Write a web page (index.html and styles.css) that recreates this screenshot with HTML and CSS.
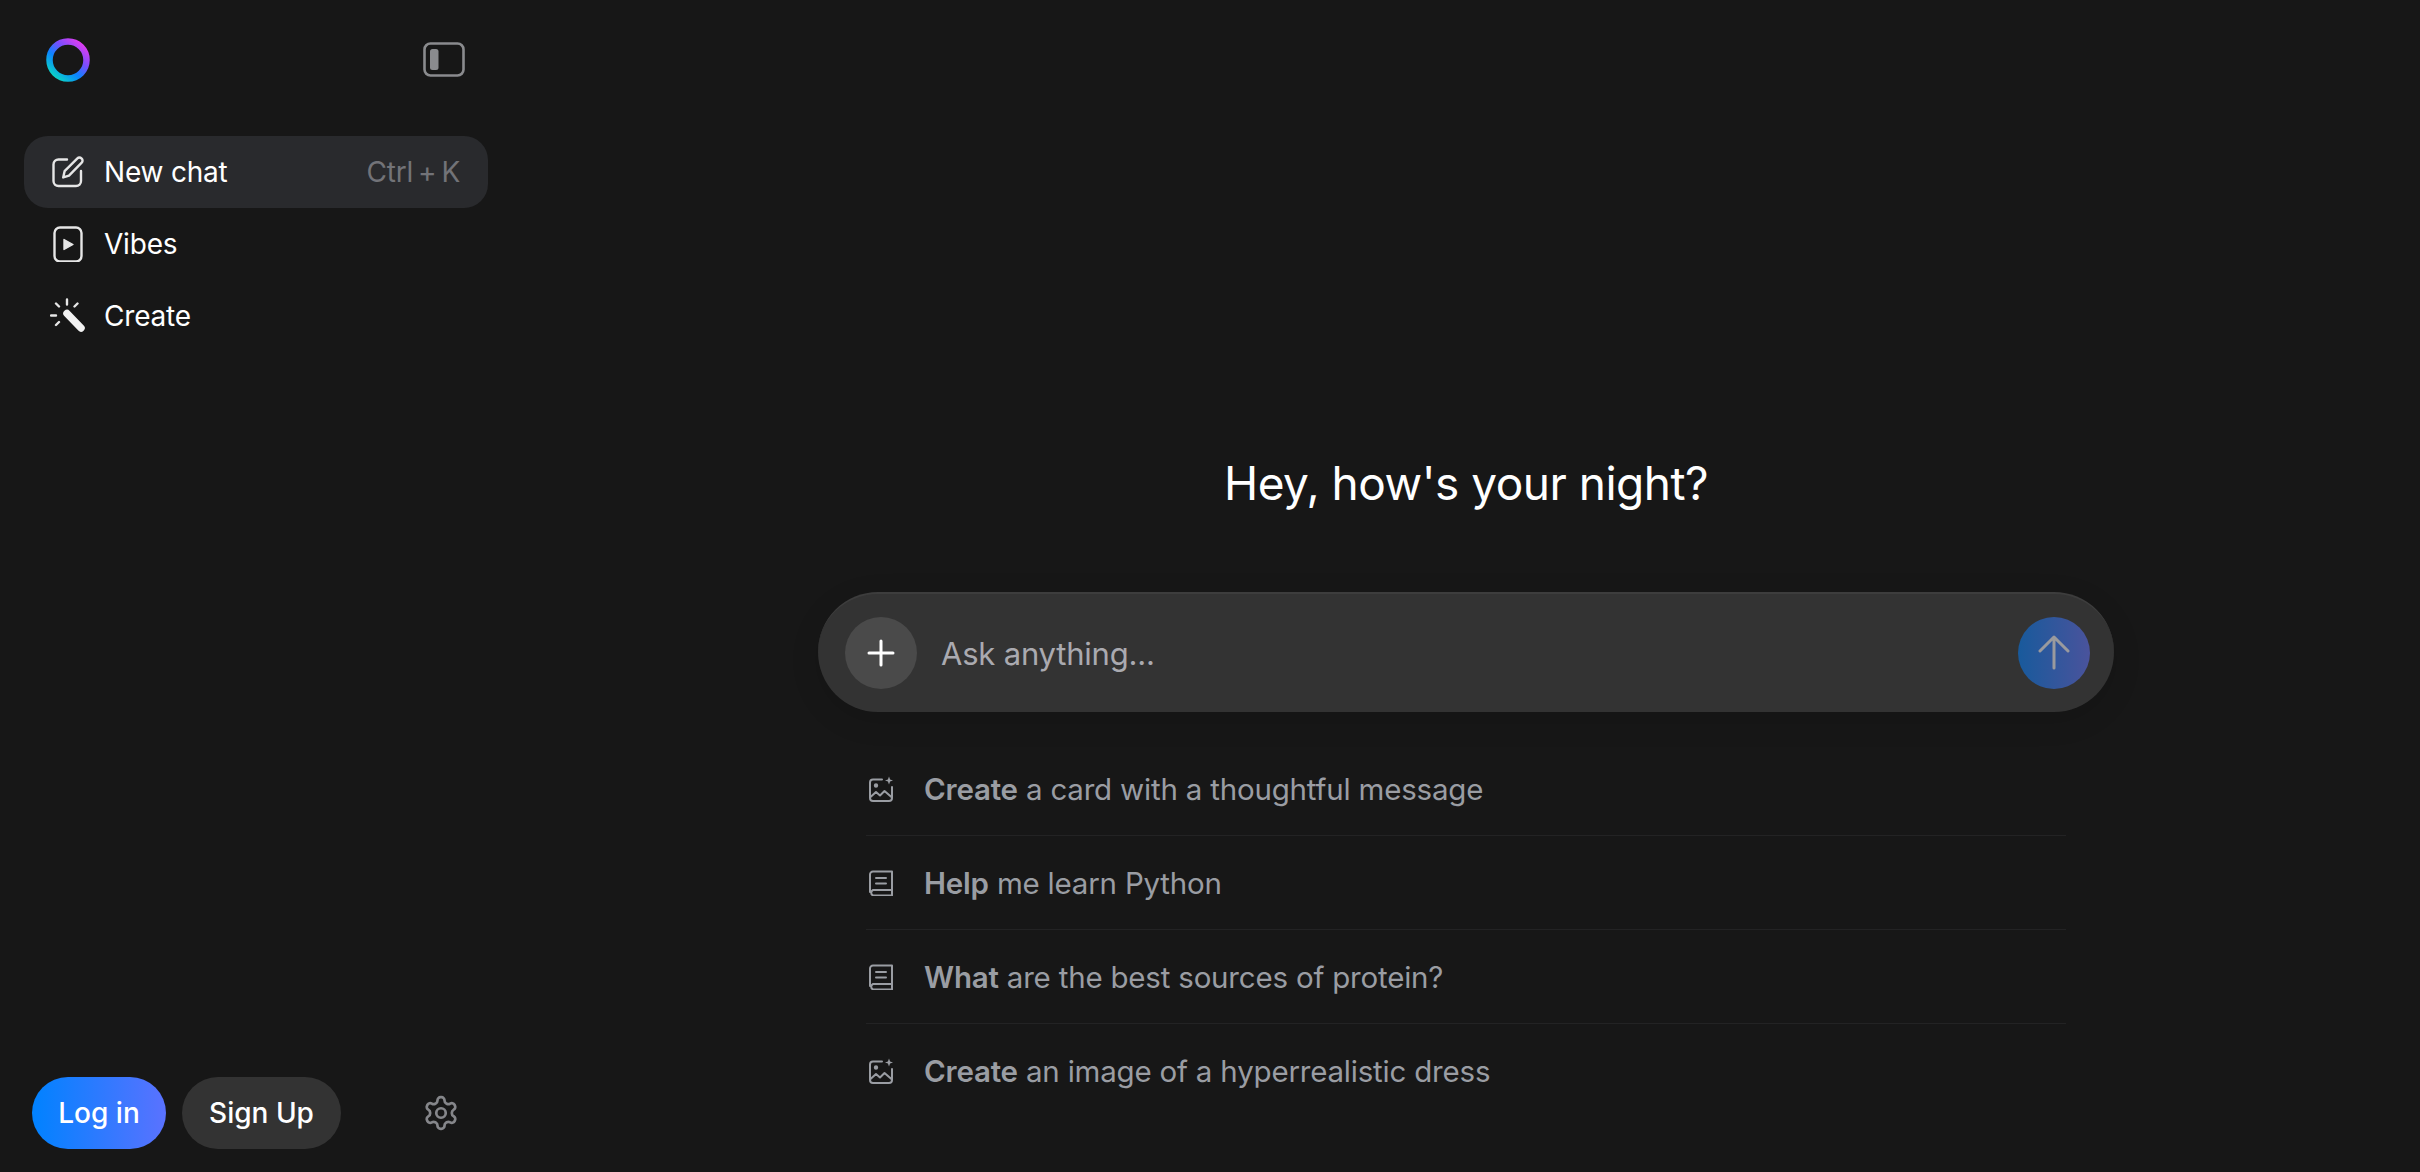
FILE: index.html
```html
<!DOCTYPE html>
<html lang="en">
<head>
<meta charset="utf-8">
<title>Meta AI</title>
<link rel="stylesheet" href="styles.css">
</head>
<body>
<div class="app">
  <aside class="sidebar">
    <div class="top-bar">
      <svg class="logo" viewBox="0 0 44 44" width="44" height="44">
        <defs>
          <linearGradient id="lg1" x1="0.9" y1="0.05" x2="0.15" y2="0.95">
            <stop offset="0" stop-color="#e23cf0"/>
            <stop offset="0.35" stop-color="#7a4dff"/>
            <stop offset="0.65" stop-color="#0a84ff"/>
            <stop offset="1" stop-color="#0bd0c8"/>
          </linearGradient>
        </defs>
        <circle cx="22" cy="22" r="18.5" fill="none" stroke="url(#lg1)" stroke-width="6.5"/>
      </svg>
      <svg class="toggle" viewBox="0 0 42 36" width="42" height="36">
        <rect x="1.5" y="1.5" width="39" height="32" rx="6" fill="none" stroke="#8a8b8e" stroke-width="2.6"/>
        <rect x="7" y="7" width="8.5" height="21" rx="2.5" fill="#8a8b8e"/>
      </svg>
    </div>
    <nav class="nav">
      <div class="nav-item active">
        <svg class="nav-icon" viewBox="0 0 36 36" width="36" height="36" fill="none" stroke="#e6e6e6" stroke-width="2.4" stroke-linecap="round" stroke-linejoin="round">
          <path d="M17 5.5H8.5a5 5 0 0 0-5 5V27a5 5 0 0 0 5 5H26a5 5 0 0 0 5-5V17"/>
          <path d="M13.2 23.4l1.4-6.2L27.4 4.4a2.8 2.8 0 0 1 4 0l.3.3a2.8 2.8 0 0 1 0 4L19 21.6z"/>
        </svg>
        <span class="nav-label">New chat</span>
        <span class="shortcut">Ctrl<i class="plus">+</i>K</span>
      </div>
      <div class="nav-item">
        <svg class="nav-icon" viewBox="0 0 36 36" width="36" height="36" fill="none" stroke="#e6e6e6" stroke-width="2.4">
          <rect x="4.5" y="1.5" width="27" height="34" rx="5.5"/>
          <path d="M14 13.5l9 5-9 5z" fill="#e6e6e6" stroke-linejoin="round" stroke-width="1.4"/>
        </svg>
        <span class="nav-label">Vibes</span>
      </div>
      <div class="nav-item">
        <svg class="nav-icon" viewBox="0 0 36 36" width="36" height="36" fill="none" stroke="#e6e6e6" stroke-width="2.4" stroke-linecap="round">
          <path d="M17 1.5v5M6 5.5l3 3M27.500 5.500l-3 3M1 17.500h5M6 27l3-3"/>
          <path d="M17 15.500L31 30" stroke="#f2f2f2" stroke-width="7.500"/>
        </svg>
        <span class="nav-label">Create</span>
      </div>
    </nav>
    <div class="auth">
      <button class="btn login">Log in</button>
      <button class="btn signup">Sign Up</button>
      <svg class="gear" viewBox="0 0 24 24" width="38" height="38" fill="none" stroke="#85868a" stroke-width="1.7" stroke-linecap="round" stroke-linejoin="round">
        <path d="M12.22 2h-.44a2 2 0 0 0-2 2v.18a2 2 0 0 1-1 1.73l-.43.25a2 2 0 0 1-2 0l-.15-.08a2 2 0 0 0-2.73.73l-.22.38a2 2 0 0 0 .73 2.73l.15.1a2 2 0 0 1 1 1.72v.51a2 2 0 0 1-1 1.74l-.15.09a2 2 0 0 0-.73 2.73l.22.38a2 2 0 0 0 2.73.73l.15-.08a2 2 0 0 1 2 0l.43.25a2 2 0 0 1 1 1.73V20a2 2 0 0 0 2 2h.44a2 2 0 0 0 2-2v-.18a2 2 0 0 1 1-1.73l.43-.25a2 2 0 0 1 2 0l.15.08a2 2 0 0 0 2.73-.73l.22-.39a2 2 0 0 0-.73-2.73l-.15-.08a2 2 0 0 1-1-1.74v-.5a2 2 0 0 1 1-1.74l.15-.09a2 2 0 0 0 .73-2.73l-.22-.38a2 2 0 0 0-2.73-.73l-.15.08a2 2 0 0 1-2 0l-.43-.25a2 2 0 0 1-1-1.73V4a2 2 0 0 0-2-2z"/>
        <circle cx="12" cy="12" r="3"/>
      </svg>
    </div>
  </aside>
  <main class="main">
    <h1 class="greeting">Hey, how's your night?</h1>
    <div class="composer">
      <div class="circle add">
        <svg viewBox="0 0 28 28" width="28" height="28" fill="none" stroke="#fff" stroke-width="3" stroke-linecap="round"><path d="M14 2v24M2 14h24"/></svg>
      </div>
      <span class="placeholder">Ask anything...</span>
      <div class="circle send">
        <svg viewBox="0 0 32 36" width="32" height="36" fill="none" stroke="#9a9a9e" stroke-width="3" stroke-linecap="round" stroke-linejoin="round"><path d="M16 33V2M2 16L16 2l14 14"/></svg>
      </div>
    </div>
    <ul class="suggestions">
      <li class="suggestion">
        <svg class="s-icon" viewBox="0 0 26 26" width="26" height="26" fill="none" stroke="#9a9da3" stroke-width="2" stroke-linecap="round" stroke-linejoin="round"><path d="M14 3.500H5a3 3 0 0 0-3 3V22a3 3 0 0 0 3 3h16a3 3 0 0 0 3-3V11"/><path d="M2.500 21l5.500-5 4 3.500 4.500-4.500 7.500 6.500"/><circle cx="8" cy="9.500" r="1.200" fill="#9a9da3"/><path d="M21 .5l1.100 2.900L25 4.500l-2.900 1.100L21 8.500l-1.100-2.900L17 4.500l2.900-1.100z" fill="#9a9da3" stroke="none"/></svg>
        <span><b>Create</b> a card with a thoughtful message</span>
      </li>
      <li class="suggestion">
        <svg class="s-icon" viewBox="0 0 26 26" width="26" height="26" fill="none" stroke="#9a9da3" stroke-width="2" stroke-linecap="round" stroke-linejoin="round"><path d="M24 20H5a3 3 0 0 0 0 5.500h19V1.500H5a3 3 0 0 0-3 3V22"/><path d="M8 8h10M8 13.500h10"/></svg>
        <span><b>Help</b> me learn Python</span>
      </li>
      <li class="suggestion">
        <svg class="s-icon" viewBox="0 0 26 26" width="26" height="26" fill="none" stroke="#9a9da3" stroke-width="2" stroke-linecap="round" stroke-linejoin="round"><path d="M24 20H5a3 3 0 0 0 0 5.500h19V1.500H5a3 3 0 0 0-3 3V22"/><path d="M8 8h10M8 13.500h10"/></svg>
        <span><b>What</b> are the best sources of protein?</span>
      </li>
      <li class="suggestion">
        <svg class="s-icon" viewBox="0 0 26 26" width="26" height="26" fill="none" stroke="#9a9da3" stroke-width="2" stroke-linecap="round" stroke-linejoin="round"><path d="M14 3.500H5a3 3 0 0 0-3 3V22a3 3 0 0 0 3 3h16a3 3 0 0 0 3-3V11"/><path d="M2.500 21l5.500-5 4 3.500 4.500-4.500 7.500 6.500"/><circle cx="8" cy="9.500" r="1.200" fill="#9a9da3"/><path d="M21 .5l1.100 2.900L25 4.500l-2.900 1.100L21 8.500l-1.100-2.900L17 4.500l2.900-1.100z" fill="#9a9da3" stroke="none"/></svg>
        <span><b>Create</b> an image of a hyperrealistic dress</span>
      </li>
    </ul>
  </main>
</div>
</body>
</html>
```

FILE: styles.css
```css
* { box-sizing: border-box; }
html, body { margin: 0; height: 100%; }
body {
  background: #171717;
  color: #fff;
  font-family: Inter, "Liberation Sans", sans-serif;
  overflow: hidden;
}
.app { display: flex; height: 1172px; }
.sidebar {
  width: 512px;
  flex: none;
  display: flex;
  flex-direction: column;
  padding: 0 24px 23px;
}
.top-bar {
  display: flex;
  align-items: center;
  justify-content: space-between;
  height: 136px;
  padding: 0 23px 16px 22px;
}
.logo { display: block; }
.toggle { display: block; }
.nav { display: flex; flex-direction: column; }
.nav-item {
  display: flex;
  align-items: center;
  height: 72px;
  padding: 0 28px 0 26px;
  border-radius: 24px;
  font-size: 28px;
}
.nav-item.active { background: #292a2d; }
.nav-icon { flex: none; margin-right: 18px; }
.nav-label { flex: 1; letter-spacing: -0.2px; }
.shortcut { color: #727378; letter-spacing: -0.2px; }
.plus { font-style: normal; margin: 0 5px; }
.auth {
  margin-top: auto;
  display: flex;
  align-items: center;
  gap: 16px;
  padding-left: 8px;
}
.btn {
  height: 72px;
  border: 0;
  border-radius: 36px;
  color: #fff;
  font: 500 28px Inter, "Liberation Sans", sans-serif;
  padding: 0;
}
.login { width: 134px; background: linear-gradient(90deg, #0082ff, #5a72ff); }
.signup { width: 159px; background: #333333; }
.gear { margin-left: 65px; display: block; }
.main {
  flex: 1;
  display: flex;
  flex-direction: column;
  align-items: center;
  padding-top: 450px;
}
.greeting {
  margin: 0;
  font-size: 46px;
  line-height: 66px;
  font-weight: 400;
  letter-spacing: -0.5px;
}
.composer {
  margin-top: 76px;
  width: 1296px;
  height: 120px;
  flex: none;
  display: flex;
  align-items: center;
  padding: 0 24px 0 27px;
  background: #333333;
  border-top: 2px solid #3d3d3d;
  border-radius: 60px;
  box-shadow: 0 8px 30px rgba(0, 0, 0, 0.12);
}
.circle {
  width: 72px;
  height: 72px;
  border-radius: 50%;
  flex: none;
  display: flex;
  align-items: center;
  justify-content: center;
}
.add { background: #4a4a4a; }
.send { background: linear-gradient(90deg, #185a9c, #4a539c); }
.placeholder {
  flex: 1;
  margin-left: 24px;
  font-size: 31px;
  color: #aaaab0;
  letter-spacing: -0.2px;
}
.suggestions {
  list-style: none;
  margin: 30px 0 0;
  padding: 0;
  width: 1200px;
}
.suggestion {
  display: flex;
  align-items: center;
  height: 94px;
  border-bottom: 1px solid #232324;
  font-size: 29.500px;
  color: #9a9da3;
  letter-spacing: -0.2px;
}
.suggestion:last-child { border-bottom: 0; }
.suggestion b { font-weight: 600; }
.s-icon { flex: none; margin: 0 30px 0 2px; }
```
